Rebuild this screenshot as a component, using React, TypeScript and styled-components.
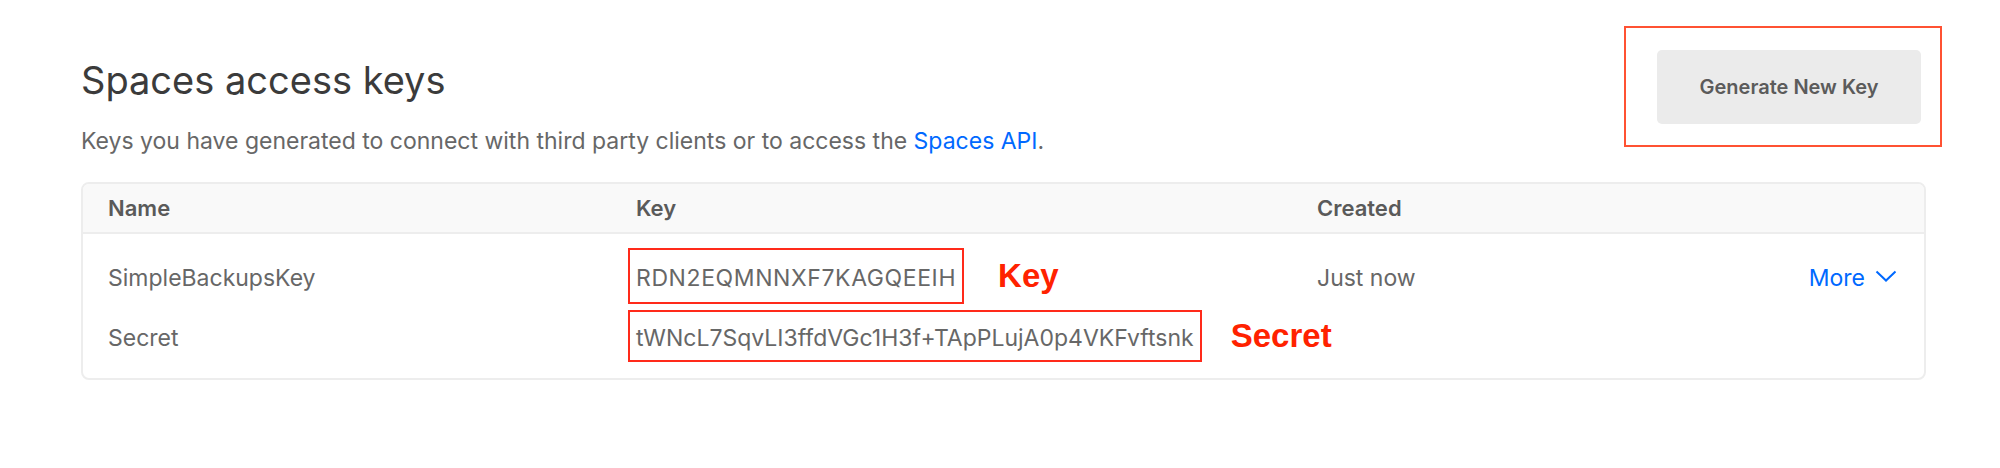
import React from "react"
import styled, { createGlobalStyle } from "styled-components"

const GlobalStyle = createGlobalStyle`
  * { box-sizing: border-box; }
  body {
    margin: 0;
    background: #fff;
    font-family: Inter, "Noto Sans", sans-serif;
    color: #666;
  }
`

const Page = styled.main`
  padding: 26px 74px 0 81px;
`

const TopBar = styled.div`
  display: flex;
  justify-content: space-between;
  align-items: flex-start;
`

const Intro = styled.div`
  padding-top: 31px;
`

const Title = styled.h1`
  margin: 0;
  font-size: 38px;
  line-height: 46px;
  font-weight: 400;
  color: #3b3b3b;
`

const Subtitle = styled.p`
  margin: 23px 0 0;
  font-size: 23px;
  line-height: 30px;
  color: #676767;

  a {
    color: #0069ff;
    text-decoration: none;
  }
`

const Highlight = styled.div`
  margin-right: -16px;
  width: 318px;
  height: 121px;
  border: 2px solid #ff5233;
  padding: 22px 19px 0 31px;
`

const Button = styled.button`
  width: 264px;
  height: 74px;
  border: none;
  border-radius: 5px;
  background: #ebebeb;
  color: #5b5b5b;
  font-family: inherit;
  font-size: 20px;
  font-weight: 600;
  cursor: pointer;
`

const Card = styled.section`
  margin-top: 26px;
  border: 2px solid #ededed;
  border-radius: 8px;
  overflow: hidden;
`

const Grid = styled.div<{ $head?: boolean }>`
  display: grid;
  grid-template-columns: 528px 681px 1fr auto;
  align-items: center;
  padding: 0 27px 0 25px;
  background: ${(p) => (p.$head ? "#f9f9f9" : "#fff")};
  border-bottom: ${(p) => (p.$head ? "2px solid #ededed" : "none")};
`

const HeadCell = styled.div`
  font-size: 22px;
  line-height: 48px;
  font-weight: 600;
  color: #5a5a5a;
`

const Body = styled.div`
  display: flex;
  flex-direction: column;
  gap: 6px;
  padding: 14px 0 16px;
`

const Cell = styled.div`
  font-size: 23px;
  line-height: 30px;
  padding-top: 3px;
  color: #676767;
`

const ValueWrap = styled.div<{ $span?: number; $gap: number }>`
  display: flex;
  align-items: center;
  gap: ${(p) => p.$gap}px;
  margin-left: -8px;
  grid-column: ${(p) => (p.$span ? `span ${p.$span}` : "auto")};
`

const Boxed = styled.span<{ $h: number; $spread?: boolean }>`
  display: inline-flex;
  align-items: center;
  height: ${(p) => p.$h}px;
  padding: 3px 6px 0;
  border: 2px solid #ff2a1a;
  font-size: 23px;
  letter-spacing: ${(p) => (p.$spread ? "0.6px" : "0")};
  color: #676767;
  white-space: nowrap;
`

const Note = styled.span`
  font-family: "Liberation Sans", Arial, sans-serif;
  font-weight: 700;
  font-size: 33px;
  color: #ff2200;
`

const More = styled.a`
  display: flex;
  align-items: center;
  gap: 10px;
  font-size: 23px;
  padding-top: 3px;
  color: #0069ff;
  text-decoration: none;

  svg {
    margin-top: -3px;
  }
`

function Chevron() {
  return (
    <svg width="22" height="12" viewBox="0 0 22 12" fill="none">
      <polyline points="1.5,1.5 11,10.5 20.5,1.5" stroke="#0069ff" strokeWidth="2" />
    </svg>
  )
}

export default function App() {
  return (
    <>
      <GlobalStyle />
      <Page>
        <TopBar>
          <Intro>
            <Title>Spaces access keys</Title>
            <Subtitle>
              Keys you have generated to connect with third party clients or to access the{" "}
              <a href="#">Spaces API</a>.
            </Subtitle>
          </Intro>
          <Highlight>
            <Button>Generate New Key</Button>
          </Highlight>
        </TopBar>
        <Card>
          <Grid $head>
            <HeadCell>Name</HeadCell>
            <HeadCell>Key</HeadCell>
            <HeadCell>Created</HeadCell>
            <HeadCell />
          </Grid>
          <Body>
            <Grid>
              <Cell>SimpleBackupsKey</Cell>
              <ValueWrap $gap={34}>
                <Boxed $h={56} $spread>
                  RDN2EQMNNXF7KAGQEEIH
                </Boxed>
                <Note>Key</Note>
              </ValueWrap>
              <Cell>Just now</Cell>
              <More href="#">
                More <Chevron />
              </More>
            </Grid>
            <Grid>
              <Cell>Secret</Cell>
              <ValueWrap $span={2} $gap={29}>
                <Boxed $h={52}>tWNcL7SqvLI3ffdVGc1H3f+TApPLujA0p4VKFvftsnk</Boxed>
                <Note>Secret</Note>
              </ValueWrap>
              <Cell />
            </Grid>
          </Body>
        </Card>
      </Page>
    </>
  )
}
